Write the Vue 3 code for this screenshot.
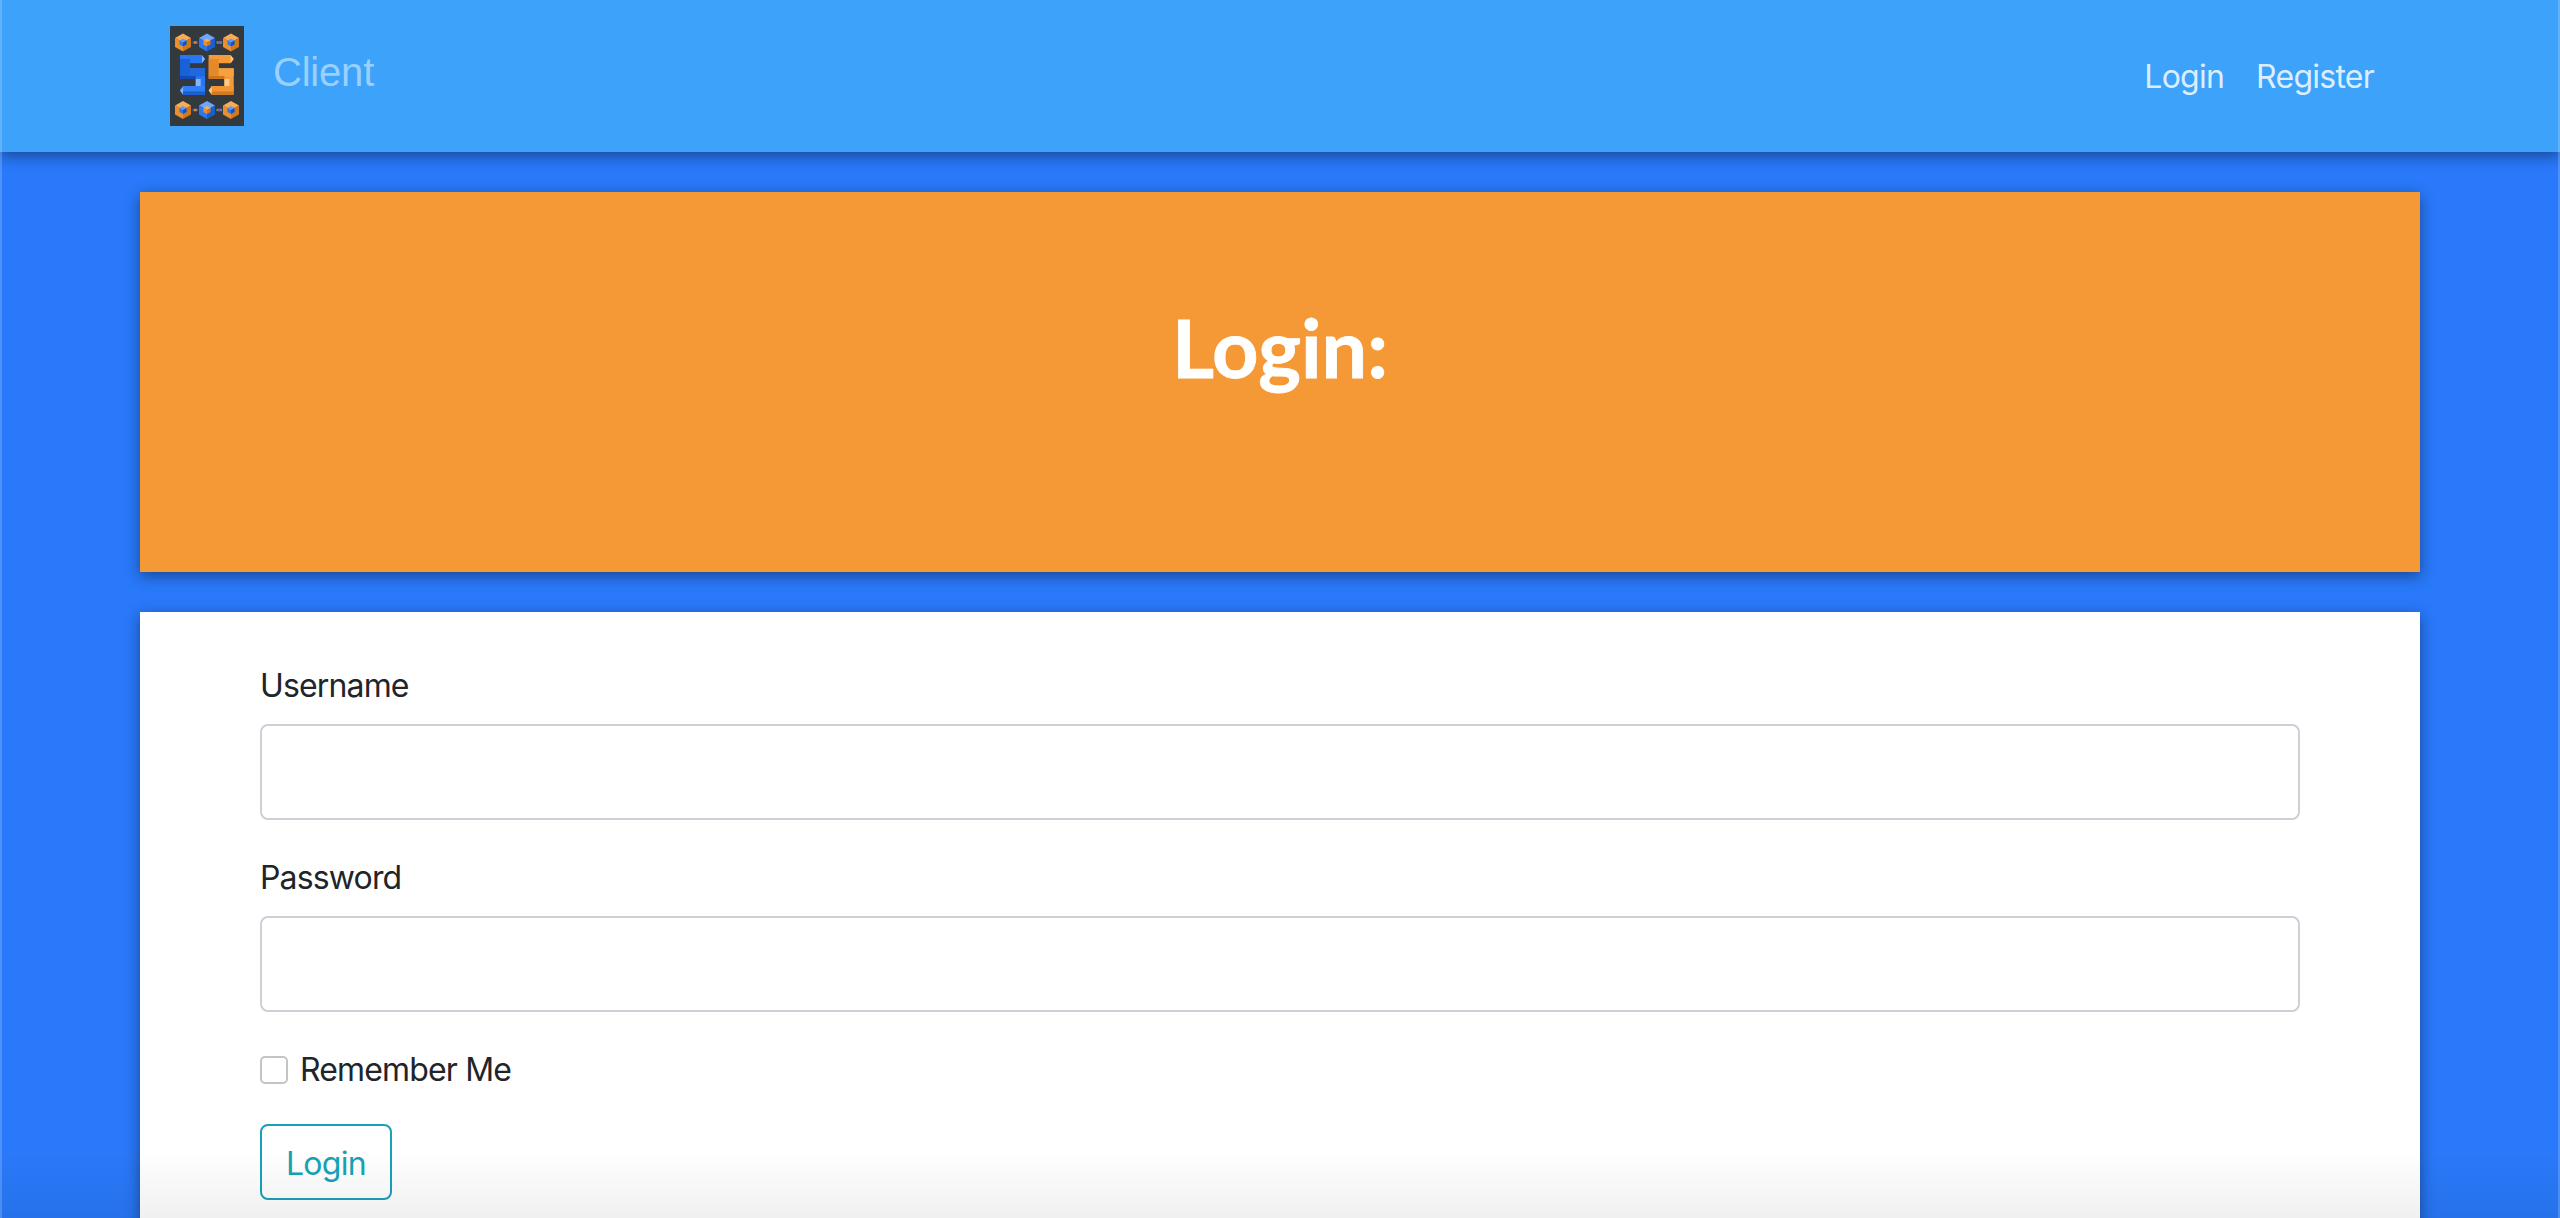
<script setup>
const orange = ["#f9ad50", "#ee8f2c", "#cf7820"];
const blue = ["#5b9bff", "#2d78f0", "#1450c0"];
const cubes = [
  { x: 13, y: 16.5, outer: orange, inner: blue },
  { x: 37, y: 16.5, outer: ["#6ea6ff", "#2d78f0", "#1a5fd0"], inner: orange },
  { x: 61, y: 16.5, outer: orange, inner: blue },
  { x: 13, y: 84, outer: orange, inner: blue },
  { x: 37, y: 84, outer: ["#6ea6ff", "#2d78f0", "#1a5fd0"], inner: orange },
  { x: 61, y: 84, outer: orange, inner: blue },
];
const links = [
  { x: 22.5, y: 16.5, side: "#2d66c0", dot: "#e8892a" },
  { x: 46.5, y: 16.5, side: "#c9781f", dot: "#2d78f0" },
  { x: 22.5, y: 84, side: "#2d66c0", dot: "#e8892a" },
  { x: 46.5, y: 84, side: "#c9781f", dot: "#2d78f0" },
];
const letters = [
  { dx: 0, face: "#2a76f2", dark: "#1a60d6", mid: "#2068e0", band: "#0f4cb6", low: "#2f7ff8", edge: "#1a5fd0", light: "#86b4ff" },
  { dx: 28.7, face: "#f59a36", dark: "#e48a2a", mid: "#f7a03e", band: "#cc751e", low: "#f29433", edge: "#d07a22", light: "#fbc98c" },
];
</script>

<template>
  <div class="page">
    <nav class="navbar">
      <a class="brand">
        <svg class="logo" viewBox="0 0 74 100" width="74" height="100">
          <rect width="74" height="100" fill="#33393d" />
          <g v-for="l in links" :key="l.x + '-' + l.y">
            <rect :x="l.x" :y="l.y - 1.2" width="5.5" height="2.4" :fill="l.side" />
            <rect :x="l.x + 1.6" :y="l.y - 1.2" width="2.4" height="2.4" :fill="l.dot" />
          </g>
          <g v-for="c in cubes" :key="c.x + '-' + c.y" :transform="`translate(${c.x} ${c.y})`">
            <polygon points="0,-9 8,-4.5 0,0 -8,-4.5" :fill="c.outer[0]" />
            <polygon points="-8,-4.5 0,0 0,9 -8,4.5" :fill="c.outer[1]" />
            <polygon points="8,-4.5 0,0 0,9 8,4.5" :fill="c.outer[2]" />
            <polygon points="0,-4 3.6,-2 0,0 -3.6,-2" :fill="c.inner[0]" />
            <polygon points="-3.6,-2 0,0 0,4 -3.6,2" :fill="c.inner[1]" />
            <polygon points="3.6,-2 0,0 0,4 3.6,2" :fill="c.inner[2]" />
          </g>
          <g v-for="s in letters" :key="s.dx" :transform="`translate(${s.dx} 0)`">
            <path d="M10 29H32L35 33L32 37.3H20V42.3H35V68.7H13L10 64.5L13 60H25.7V53H10Z" :fill="s.face" />
            <rect x="10" y="33" width="10" height="18" :fill="s.dark" />
            <rect x="20" y="42.3" width="15" height="8" :fill="s.mid" />
            <rect x="10" y="50" width="15.7" height="3" :fill="s.band" />
            <rect x="13" y="60" width="22" height="5.5" :fill="s.low" />
            <rect x="13" y="65.5" width="22" height="3.2" :fill="s.edge" />
            <rect x="25.7" y="53" width="5" height="7" :fill="s.light" />
            <path d="M32 29.5L35 33L32 37Z" :fill="s.light" />
            <path d="M13 60.5L10 64.5L13 68.5Z" :fill="s.light" />
          </g>
        </svg>
        <span class="brand-name">Client</span>
      </a>
      <div class="nav-links">
        <a class="nav-link">Login</a>
        <a class="nav-link">Register</a>
      </div>
    </nav>

    <main class="content">
      <section class="jumbotron">
        <h1>Login:</h1>
      </section>

      <section class="form-card">
        <form @submit.prevent>
          <div class="form-group">
            <label for="username">Username</label>
            <input id="username" type="text" />
          </div>
          <div class="form-group">
            <label for="password">Password</label>
            <input id="password" type="password" />
          </div>
          <div class="form-group check">
            <input id="remember" type="checkbox" />
            <label for="remember">Remember Me</label>
          </div>
          <button type="submit" class="btn">Login</button>
        </form>
      </section>
    </main>

    <div class="overlay"></div>
  </div>
</template>

<style scoped>
.page {
  position: relative;
  height: 100vh;
  overflow: hidden;
  background: #2979fa;
  font-family: Inter, "Liberation Sans", sans-serif;
  color: #212529;
}
.navbar {
  position: relative;
  z-index: 1;
  height: 152px;
  box-sizing: border-box;
  display: flex;
  justify-content: space-between;
  background: #3da2f9;
  padding: 26px 186px 0 170px;
  box-shadow: 0 4px 14px rgba(0, 0, 0, 0.42);
}
.brand {
  display: flex;
  align-items: flex-start;
  gap: 29px;
}
.logo {
  display: block;
}
.brand-name {
  font-family: "Liberation Sans", Arial, sans-serif;
  font-size: 40px;
  letter-spacing: -0.2px;
  line-height: 60px;
  margin-top: 16px;
  color: #9ad0ff;
}
.nav-links {
  display: flex;
  gap: 32px;
  padding-top: 27px;
}
.nav-link {
  font-size: 32px;
  letter-spacing: -0.75px;
  line-height: 48px;
  color: #dbeeff;
}
.content {
  padding: 40px 140px 0;
}
.jumbotron {
  height: 380px;
  margin-bottom: 40px;
  background: #f59936;
  box-shadow: 0 4px 14px rgba(0, 0, 0, 0.42);
  text-align: center;
  box-sizing: border-box;
  padding-top: 107px;
}
.jumbotron h1 {
  margin: 0;
  font-family: Lato, sans-serif;
  font-weight: 700;
  font-size: 81px;
  line-height: 96px;
  -webkit-text-stroke: 0.8px #fff;
  color: #fff;
}
.form-card {
  background: #fff;
  padding: 48px 120px;
  box-shadow: 0 4px 14px rgba(0, 0, 0, 0.42);
}
.form-group {
  margin-bottom: 32px;
}
label {
  display: block;
  font-size: 32px;
  letter-spacing: -0.85px;
  line-height: 48px;
  padding-top: 2px;
  margin-bottom: 14px;
}
input[type="text"],
input[type="password"] {
  display: block;
  width: 100%;
  height: 96px;
  box-sizing: border-box;
  border: 2px solid #cbd1d7;
  border-radius: 8px;
  background: #fff;
  outline: none;
}
.check {
  display: flex;
  align-items: flex-start;
  gap: 12px;
  margin-bottom: 30px;
}
.check label {
  margin-bottom: 0;
}
input[type="checkbox"] {
  appearance: none;
  width: 28px;
  height: 28px;
  margin: 12px 0 0;
  border: 2px solid #c4c4c4;
  border-radius: 5px;
  background: #fff;
}
.btn {
  display: block;
  width: 132px;
  height: 76px;
  box-sizing: border-box;
  padding: 2px 0 0;
  border: 2px solid #17a2b8;
  border-radius: 8px;
  background: transparent;
  color: #17a2b8;
  font-family: inherit;
  font-size: 32px;
  letter-spacing: -0.7px;
}
.overlay {
  position: absolute;
  inset: 0;
  z-index: 2;
  pointer-events: none;
  border-left: 2px solid rgba(255, 255, 255, 0.18);
  border-right: 2px solid rgba(255, 255, 255, 0.18);
  background: linear-gradient(to top, rgba(0, 0, 0, 0.06), rgba(0, 0, 0, 0) 68px);
}
</style>
